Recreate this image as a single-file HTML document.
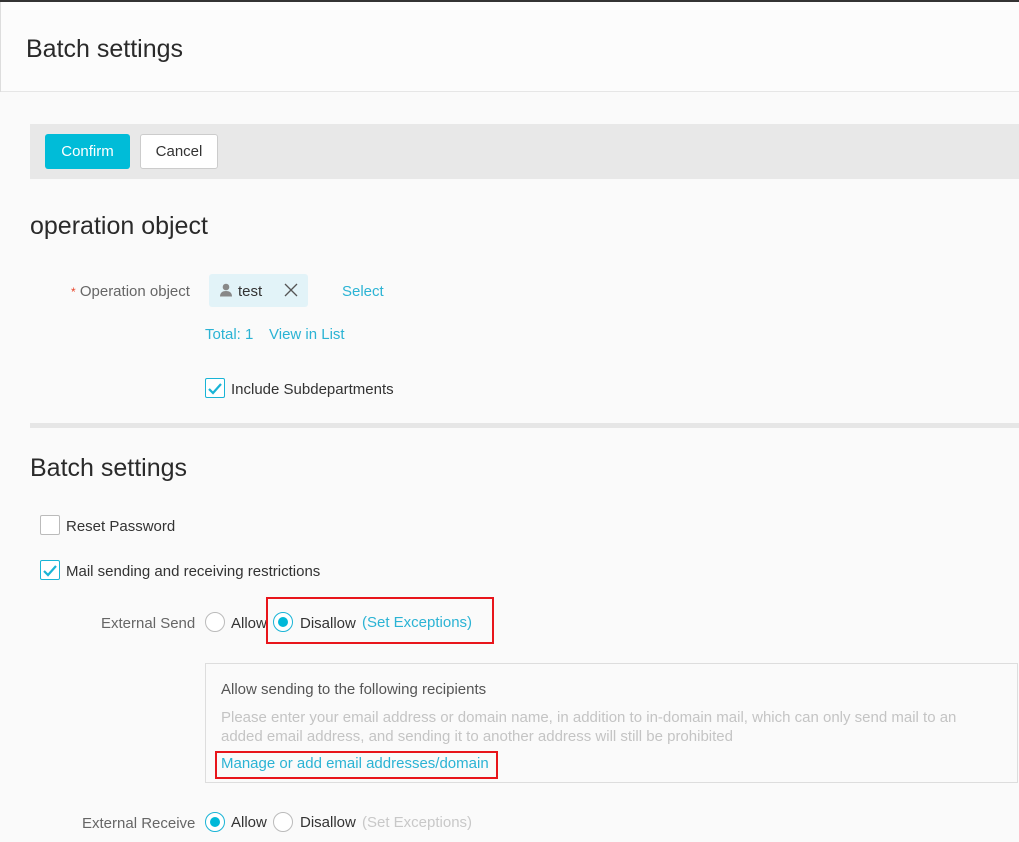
<!DOCTYPE html>
<html><head><meta charset="utf-8"><style>
*{margin:0;padding:0;box-sizing:border-box}
body{width:1019px;height:842px;background:#fafafa;font-family:"Liberation Sans",Arial,sans-serif;font-size:15px;color:#333;position:relative;overflow:hidden}
.a{position:absolute;white-space:nowrap}
.t{margin-top:1px}
.blue{color:#2bb3d4}
.cb{position:absolute;width:20px;height:20px;border:1px solid #bbb;border-radius:2px;background:#fff}
.cb.on{border-color:#19b4d6}
.rd{position:absolute;width:20px;height:20px;border:1px solid #bbb;border-radius:50%;background:#fff}
.rd.on{border-color:#19b4d6}
.rd.on::after{content:"";position:absolute;left:4px;top:4px;width:10px;height:10px;border-radius:50%;background:#00b8d8}
.red{position:absolute;border:2px solid #e8151b}
</style></head><body>
<div class="a" style="left:0;top:0;width:1019px;height:2px;background:#333"></div>
<div class="a" style="left:0;top:2px;width:1px;height:90px;background:#ddd"></div>
<div class="a" style="left:1px;top:2px;width:1018px;height:90px;background:#fcfcfc;border-bottom:1px solid #e6e6e6"></div>
<div class="a" style="left:26px;top:35px;font-size:25px;color:#2a2a2a">Batch settings</div>

<div class="a" style="left:30px;top:124px;width:989px;height:55px;background:#e8e8e8"></div>
<div class="a" style="left:45px;top:134px;width:85px;height:35px;background:#00bcd8;border-radius:3px;color:#fff;line-height:35px;text-align:center">Confirm</div>
<div class="a" style="left:140px;top:134px;width:78px;height:35px;background:#fff;border:1px solid #ccc;border-radius:3px;line-height:33px;text-align:center;color:#333">Cancel</div>

<div class="a" style="left:30px;top:212px;font-size:25px;color:#2a2a2a">operation object</div>

<div class="a" style="left:71px;top:283px;color:#666"><span style="color:#e8452b;font-size:12px">*</span> Operation object</div>
<div class="a" style="left:209px;top:274px;width:99px;height:33px;background:#e2f3f8;border-radius:3px"></div>
<svg class="a" style="left:219px;top:283px" width="14" height="14" viewBox="0 0 14 14"><circle cx="7" cy="4" r="3.3" fill="#888"/><path d="M1 13.5c0-4 2.7-5.5 6-5.5s6 1.5 6 5.5z" fill="#888"/></svg>
<div class="a" style="left:238px;top:283px;color:#333">test</div>
<svg class="a" style="left:284px;top:283px" width="14" height="14"><path d="M1 1L13 13M13 1L1 13" stroke="#555" stroke-width="1.3"/></svg>
<div class="a blue" style="left:342px;top:283px">Select</div>
<div class="a blue" style="left:205px;top:326px">Total: 1</div>
<div class="a blue" style="left:269px;top:326px">View in List</div>

<div class="cb on" style="left:205px;top:378px"></div>
<svg class="a" style="left:207px;top:382px" width="16" height="14"><path d="M2 7l4 4 8-9" stroke="#19b4d6" stroke-width="2.2" fill="none"/></svg>
<div class="a" style="left:231px;top:381px">Include Subdepartments</div>

<div class="a" style="left:30px;top:423px;width:989px;height:5px;background:#e6e6e6"></div>

<div class="a" style="left:30px;top:454px;font-size:25px;color:#2a2a2a">Batch settings</div>

<div class="cb" style="left:40px;top:515px"></div>
<div class="a" style="left:66px;top:518px">Reset Password</div>
<div class="cb on" style="left:40px;top:560px"></div>
<svg class="a" style="left:42px;top:564px" width="16" height="14"><path d="M2 7l4 4 8-9" stroke="#19b4d6" stroke-width="2.2" fill="none"/></svg>
<div class="a" style="left:66px;top:563px">Mail sending and receiving restrictions</div>

<div class="a" style="left:101px;top:615px;color:#666">External Send</div>
<div class="rd" style="left:205px;top:612px"></div>
<div class="a" style="left:231px;top:615px">Allow</div>
<div class="rd on" style="left:273px;top:612px"></div>
<div class="a" style="left:300px;top:615px">Disallow</div>
<div class="a blue" style="left:362px;top:614px">(Set Exceptions)</div>
<div class="red" style="left:266px;top:597px;width:228px;height:47px"></div>

<div class="a" style="left:205px;top:663px;width:813px;height:120px;border:1px solid #ddd"></div>
<div class="a" style="left:221px;top:681px;color:#555">Allow sending to the following recipients</div>
<div class="a" style="left:221px;top:708px;color:#c4c4c4;line-height:19px">Please enter your email address or domain name, in addition to in-domain mail, which can only send mail to an<br>added email address, and sending it to another address will still be prohibited</div>
<div class="a blue" style="left:221px;top:755px">Manage or add email addresses/domain</div>
<div class="red" style="left:215px;top:751px;width:283px;height:28px"></div>

<div class="a" style="left:82px;top:815px;color:#666">External Receive</div>
<div class="rd on" style="left:205px;top:812px"></div>
<div class="a" style="left:231px;top:814px">Allow</div>
<div class="rd" style="left:273px;top:812px"></div>
<div class="a" style="left:300px;top:814px">Disallow</div>
<div class="a" style="left:362px;top:814px;color:#c8c8c8">(Set Exceptions)</div>
</body></html>
